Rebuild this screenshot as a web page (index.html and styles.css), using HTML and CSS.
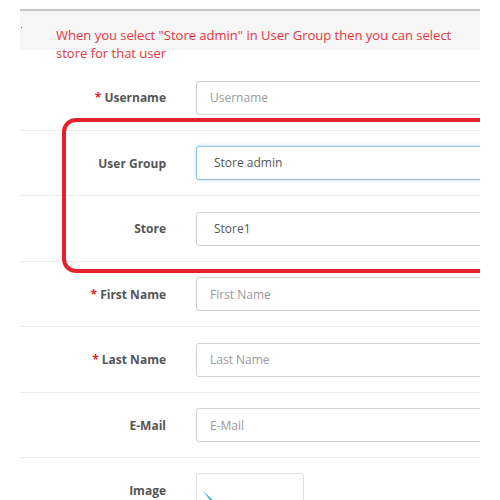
FILE: index.html
```html
<!DOCTYPE html>
<html>
<head>
<meta charset="utf-8">
<link rel="stylesheet" href="styles.css">
</head>
<body>
<div class="page">
  <div class="topline"></div>
  <div class="notice"><span class="dot"></span><p class="notice-text">When you select "Store admin" in User Group then you can select store for that user</p></div>
  <form class="form">
    <div class="row">
      <label class="label"><span class="req">*</span> Username</label>
      <div class="field"><input class="input" type="text" placeholder="Username"></div>
    </div>
    <div class="row">
      <label class="label">User Group</label>
      <div class="field"><div class="input select focus">Store admin</div></div>
    </div>
    <div class="row">
      <label class="label">Store</label>
      <div class="field"><div class="input select">Store1</div></div>
    </div>
    <div class="row">
      <label class="label"><span class="req">*</span> First Name</label>
      <div class="field"><input class="input" type="text" placeholder="First Name"></div>
    </div>
    <div class="row">
      <label class="label"><span class="req">*</span> Last Name</label>
      <div class="field"><input class="input" type="text" placeholder="Last Name"></div>
    </div>
    <div class="row">
      <label class="label">E-Mail</label>
      <div class="field"><input class="input" type="text" placeholder="E-Mail"></div>
    </div>
    <div class="row row-image">
      <label class="label">Image</label>
      <div class="field">
        <div class="thumb">
          <svg class="thumb-logo" width="20" height="20" viewBox="0 0 20 20"><path d="M3 2 L14 12 L12 14 Z" fill="#3fb8d4"/></svg>
        </div>
      </div>
    </div>
  </form>
  <div class="highlight"></div>
</div>
</body>
</html>
```
FILE: styles.css
```css
html, body {
  margin: 0;
  padding: 0;
  background: #ffffff;
}
body {
  font-family: "Open Sans", "Liberation Sans", sans-serif;
  font-size: 12px;
  color: #555;
}
.page {
  position: relative;
  width: 460px;
  height: 500px;
  margin-left: 20px;
  overflow: hidden;
}
.topline {
  height: 2px;
  margin-top: 9px;
  background: #c6c6c6;
}
.notice {
  position: relative;
  height: 39px;
  background: #f6f6f6;
}
.dot {
  position: absolute;
  left: 1px;
  top: 16px;
  width: 1px;
  height: 1px;
  background: #777;
}
.notice-text {
  margin: 0;
  padding: 15px 0 0 36px;
  width: 410px;
  font-size: 13px;
  line-height: 18px;
  color: #e8353c;
}
.form {
  margin: 0;
  padding-top: 15px;
}
.row {
  display: flex;
  align-items: center;
  height: 65.5px;
  box-sizing: border-box;
  border-bottom: 1px solid #ececec;
  padding-top: 1px;
}
.label {
  width: 146px;
  text-align: right;
  font-weight: bold;
  font-size: 12px;
  color: #555;
  flex: none;
}
.req {
  color: #e3222b;
}
.field {
  margin-left: 30px;
  flex: none;
}
.input {
  display: block;
  box-sizing: border-box;
  width: 320px;
  height: 34px;
  padding: 0 13px;
  border: 1px solid #cfcfcf;
  border-radius: 3px;
  background: #fff;
  font-family: "Open Sans", "Liberation Sans", sans-serif;
  font-size: 12px;
  color: #555;
  outline: none;
}
.input::placeholder {
  color: #9a9a9a;
}
.select {
  line-height: 32px;
  padding-left: 17px;
}
.focus {
  border-color: #8fc0e8;
  box-shadow: 0 0 4px rgba(102, 175, 233, 0.45);
}
.row-image {
  align-items: flex-start;
  border-bottom: none;
  padding-top: 15px;
}
.row-image .label {
  margin-top: 9px;
}
.thumb {
  position: relative;
  width: 108px;
  height: 40px;
  box-sizing: border-box;
  border: 1px solid #dedede;
  border-radius: 3px;
  background: #fff;
}
.thumb-logo {
  position: absolute;
  left: 3px;
  top: 15px;
}
.highlight {
  position: absolute;
  left: 42px;
  top: 118px;
  width: 440px;
  height: 155px;
  box-sizing: border-box;
  border: 4.5px solid #e3222b;
  border-radius: 14px;
}
```
